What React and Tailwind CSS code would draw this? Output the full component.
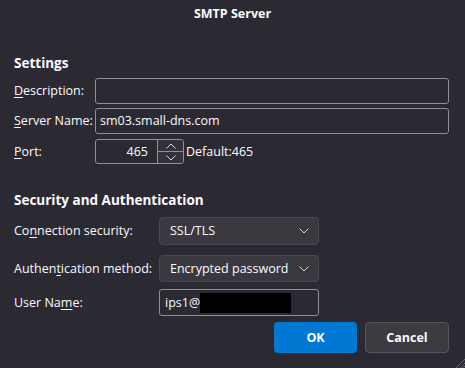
import React from 'react';

const Chevron = ({ up = false, className = '' }) => (
  <svg width="10" height="6" viewBox="0 0 10 6" className={className}>
    <polyline
      points={up ? '0.5,5.5 5,1 9.5,5.5' : '0.5,0.5 5,5 9.5,0.5'}
      fill="none"
      stroke="#d6d6dc"
      strokeWidth="1"
    />
  </svg>
);

const Key = ({ children }) => <span className="underline underline-offset-2">{children}</span>;

const TextInput = ({ value, className = '' }) => (
  <div className={`h-[26px] border border-[#8f8f9d] rounded-[3px] bg-[#2b2a33] flex items-center px-[4px] ${className}`}>
    {value}
  </div>
);

const Select = ({ value, className = '' }) => (
  <div className={`w-[160px] border border-[#4a4950] rounded-[4px] bg-[#3a3940] flex items-center pl-[10px] pr-[9px] ${className}`}>
    <span className="flex-1">{value}</span>
    <Chevron />
  </div>
);

export default function App() {
  return (
    <div
      className="w-[465px] h-[368px] bg-[#2b2a33] text-[#fbfbfe] text-[12.5px] leading-[18px] whitespace-nowrap relative overflow-hidden"
      style={{ fontFamily: '"Open Sans", "Noto Sans", sans-serif' }}
    >
      <div className="h-[28px] flex items-center justify-center text-[12.5px] font-bold">SMTP Server</div>

      <div className="pl-[14px] pr-[16px]">
        <div className="mt-[25px] h-[20px] leading-[20px] text-[13.5px] font-bold">Settings</div>

        <div className="mt-[5px] flex items-center">
          <div className="w-[81px]"><Key>D</Key>escription:</div>
          <TextInput className="flex-1" />
        </div>
        <div className="mt-[4px] flex items-center">
          <div className="w-[81px]"><Key>S</Key>erver Name:</div>
          <TextInput className="flex-1" value="sm03.small-dns.com" />
        </div>
        <div className="mt-[5px] flex items-center">
          <div className="w-[81px]"><Key>P</Key>ort:</div>
          <div className="w-[89px] h-[25px] border border-[#8f8f9d] rounded-[3px] bg-[#2b2a33] flex overflow-hidden">
            <div className="flex-1 flex items-center justify-end pr-[9px]">465</div>
            <div className="w-[26px] border-l border-[#8f8f9d] flex flex-col bg-[#34333b]">
              <div className="flex-1 flex items-center justify-center border-b border-[#8f8f9d]"><Chevron up /></div>
              <div className="flex-1 flex items-center justify-center"><Chevron /></div>
            </div>
          </div>
          <div className="ml-[2px]">Default:465</div>
        </div>

        <div className="mt-[26px] h-[20px] leading-[20px] text-[13.5px] font-bold">Security and Authentication</div>

        <div className="mt-[7px] flex items-center">
          <div className="w-[145px]">Co<Key>n</Key>nection security:</div>
          <Select className="h-[28px]" value="SSL/TLS" />
        </div>
        <div className="mt-[10px] flex items-center">
          <div className="w-[145px]">Authen<Key>t</Key>ication method:</div>
          <Select className="h-[27px]" value="Encrypted password" />
        </div>
        <div className="mt-[7px] flex items-center">
          <div className="w-[145px]">User Na<Key>m</Key>e:</div>
          <div className="w-[160px] h-[27px] border border-[#8f8f9d] rounded-[3px] bg-[#2b2a33] flex items-center pl-[5px]">
            <span>ips1@</span>
            <span className="w-[91px] h-[20px] bg-black"></span>
          </div>
        </div>

        <div className="mt-[6px] flex justify-end gap-[8px]">
          <button className="w-[83px] h-[31px] rounded-[4px] bg-[#0078d4] font-bold text-white">OK</button>
          <button className="w-[84px] h-[31px] rounded-[4px] bg-[#3c3b42] border border-[#56555c] font-bold text-[#fbfbfe]">Cancel</button>
        </div>
      </div>

      <svg width="10" height="10" viewBox="0 0 10 10" className="absolute right-0 bottom-0">
        <line x1="1" y1="10" x2="10" y2="1" stroke="#6b6a72" strokeWidth="1" />
        <line x1="5" y1="10" x2="10" y2="5" stroke="#6b6a72" strokeWidth="1" />
        <line x1="8" y1="10" x2="10" y2="8" stroke="#6b6a72" strokeWidth="1" />
      </svg>
    </div>
  );
}
